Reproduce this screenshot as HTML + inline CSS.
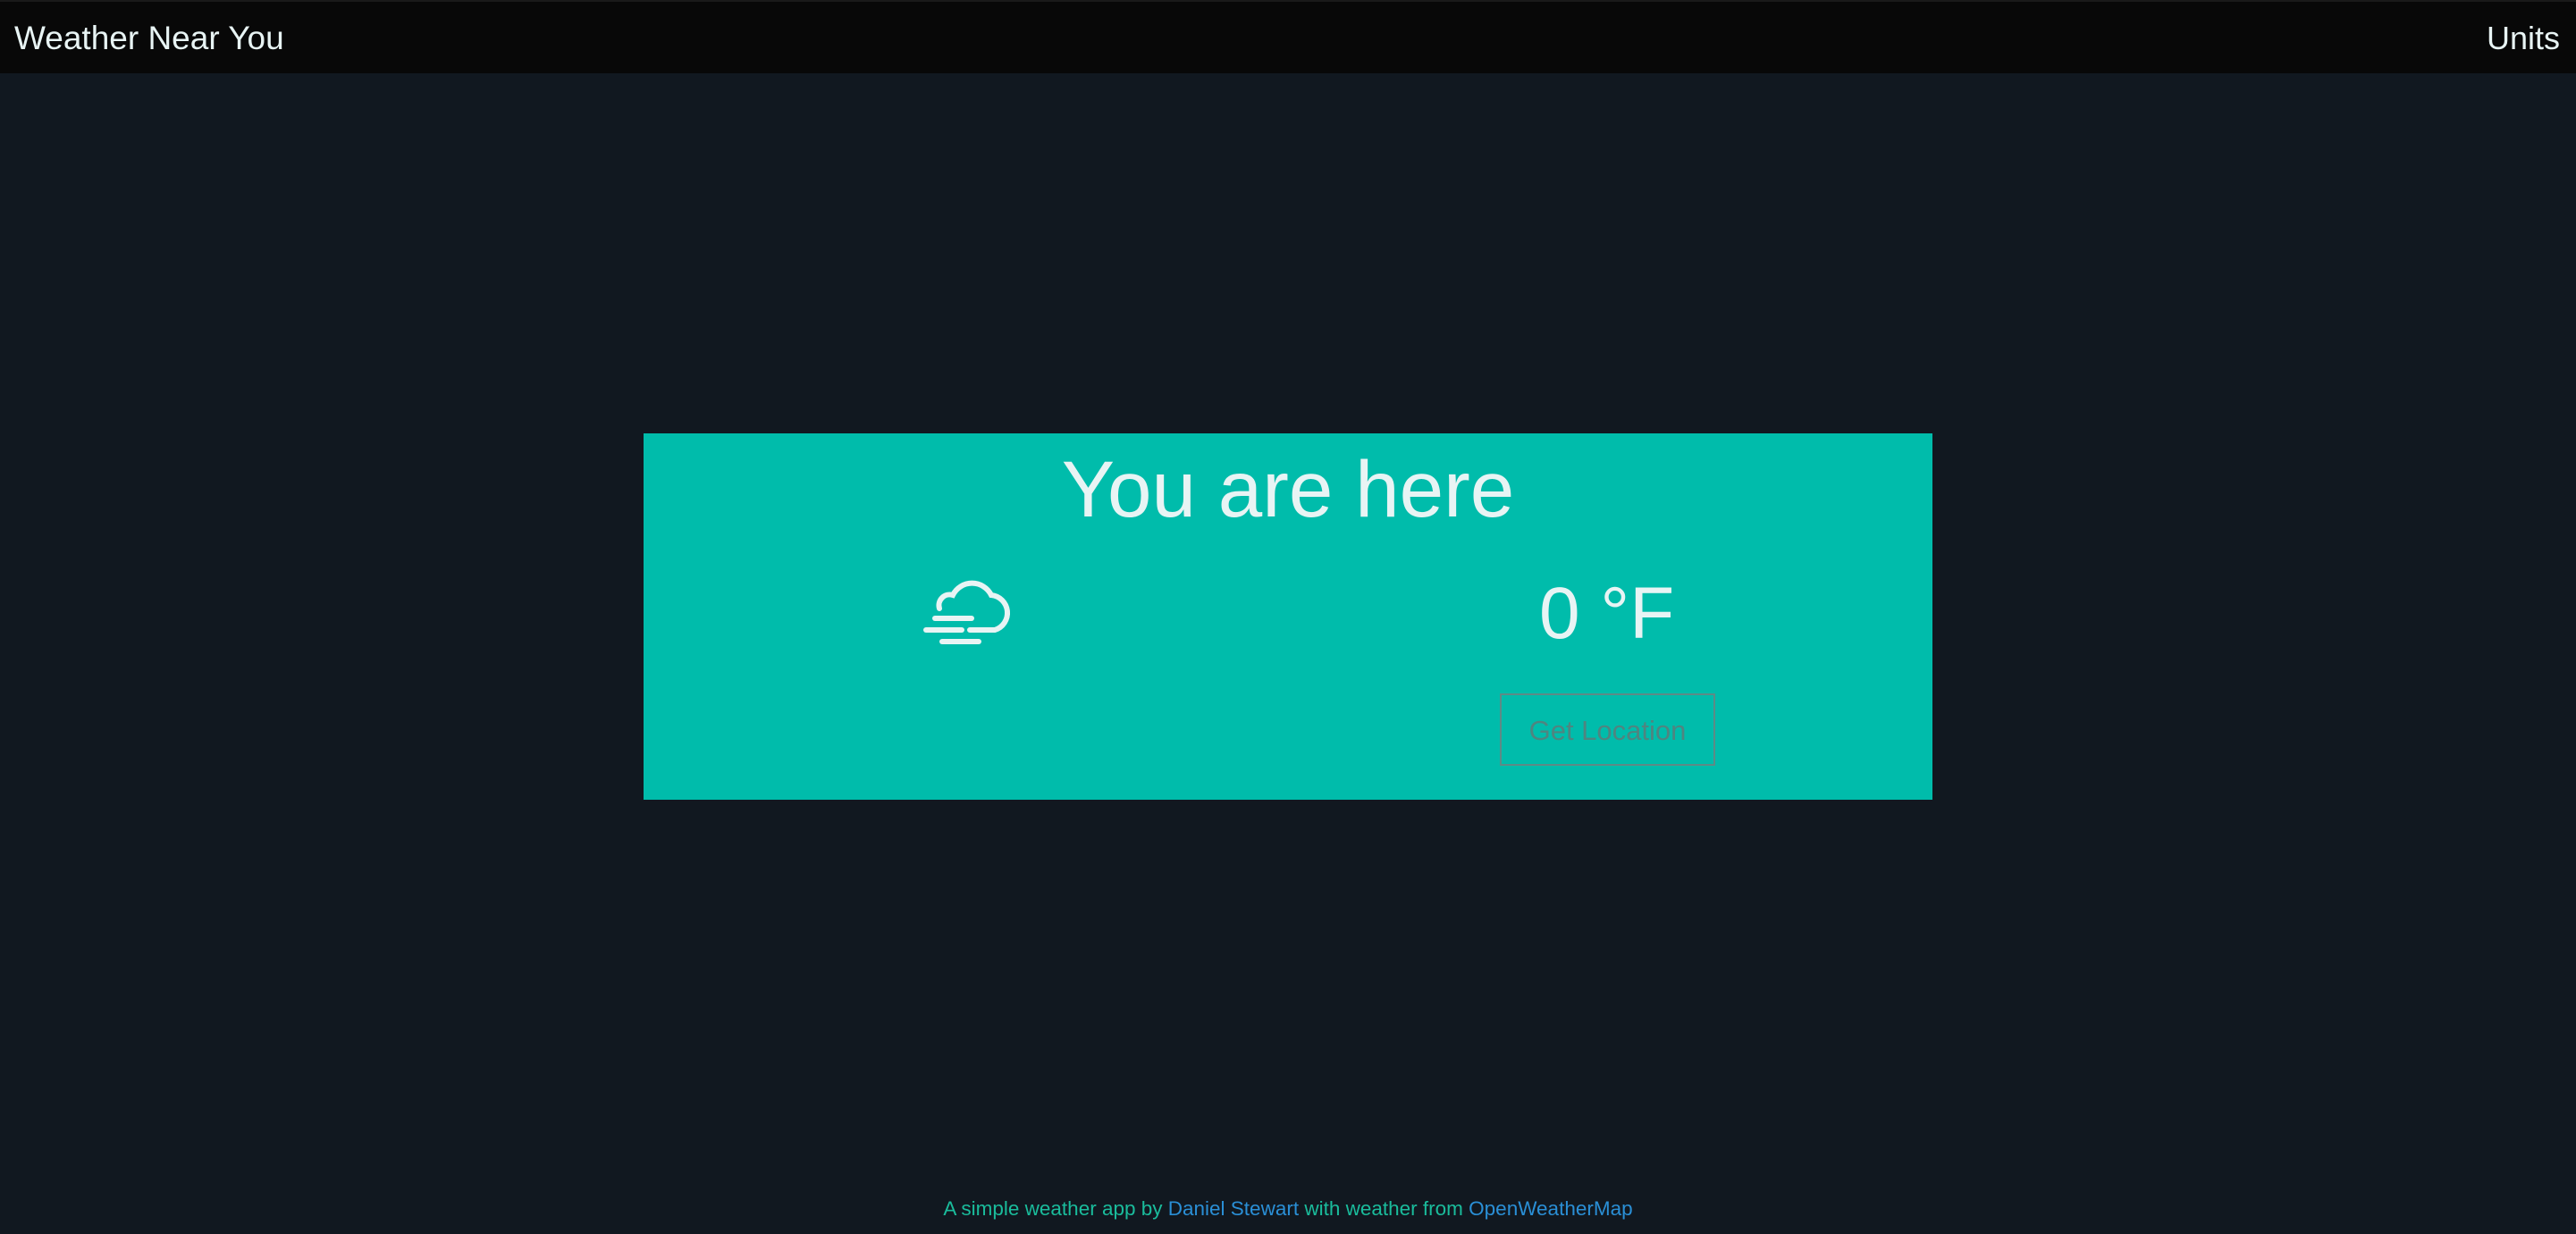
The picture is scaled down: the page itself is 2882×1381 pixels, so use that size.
<!DOCTYPE html>
<html><head><meta charset="utf-8"><style>
html,body{margin:0;padding:0;width:2882px;height:1381px;overflow:hidden;background:#111820;font-family:"Liberation Sans","DejaVu Sans",sans-serif;}
.nav{position:absolute;left:0;top:0;width:2882px;height:82px;background:#080808;border-top:2px solid #1a1a1a;box-sizing:border-box;}
.t{position:absolute;color:#e8f4f4;white-space:nowrap;}
.card{position:absolute;left:720px;top:485px;width:1442px;height:410px;background:#00bcab;}
.btn{position:absolute;left:1678px;top:776px;width:241px;height:81px;border:2px solid #5e8a86;box-sizing:border-box;color:#4f8580;font-size:31px;text-align:center;line-height:79px;}
.foot{position:absolute;left:0;width:2882px;top:1340px;text-align:center;font-size:22.5px;color:#1abc9c;}
.foot span{color:#2a8fd6;}
</style></head><body>
<div class="nav">
<div class="t" style="left:16px;top:20px;font-size:37px;">Weather Near You</div>
<div class="t" style="right:18px;top:20px;font-size:36px;">Units</div>
</div>
<div class="card"></div>
<div class="t" style="left:0;width:2882px;text-align:center;top:496px;font-size:89px;">You are here</div>
<div class="t" style="left:1722px;top:640px;font-size:82px;">0 °F</div>
<svg style="position:absolute;left:0;top:0" width="2882" height="1381">
<g fill="none" stroke="#e8f4f4" stroke-width="6" stroke-linecap="round">
<path d="M1051 681 A12 12 0 0 1 1066 666 A24 24 0 0 1 1109 666 A20 20 0 0 1 1113 705 L1085 705"/>
<path d="M1046 692 L1087 692"/>
<path d="M1036 705 L1076 705"/>
<path d="M1054 718 L1095 718"/>
</g></svg>
<div class="btn">Get Location</div>
<div class="foot">A simple weather app by <span>Daniel Stewart</span> with weather from <span>OpenWeatherMap</span></div>
</body></html>
